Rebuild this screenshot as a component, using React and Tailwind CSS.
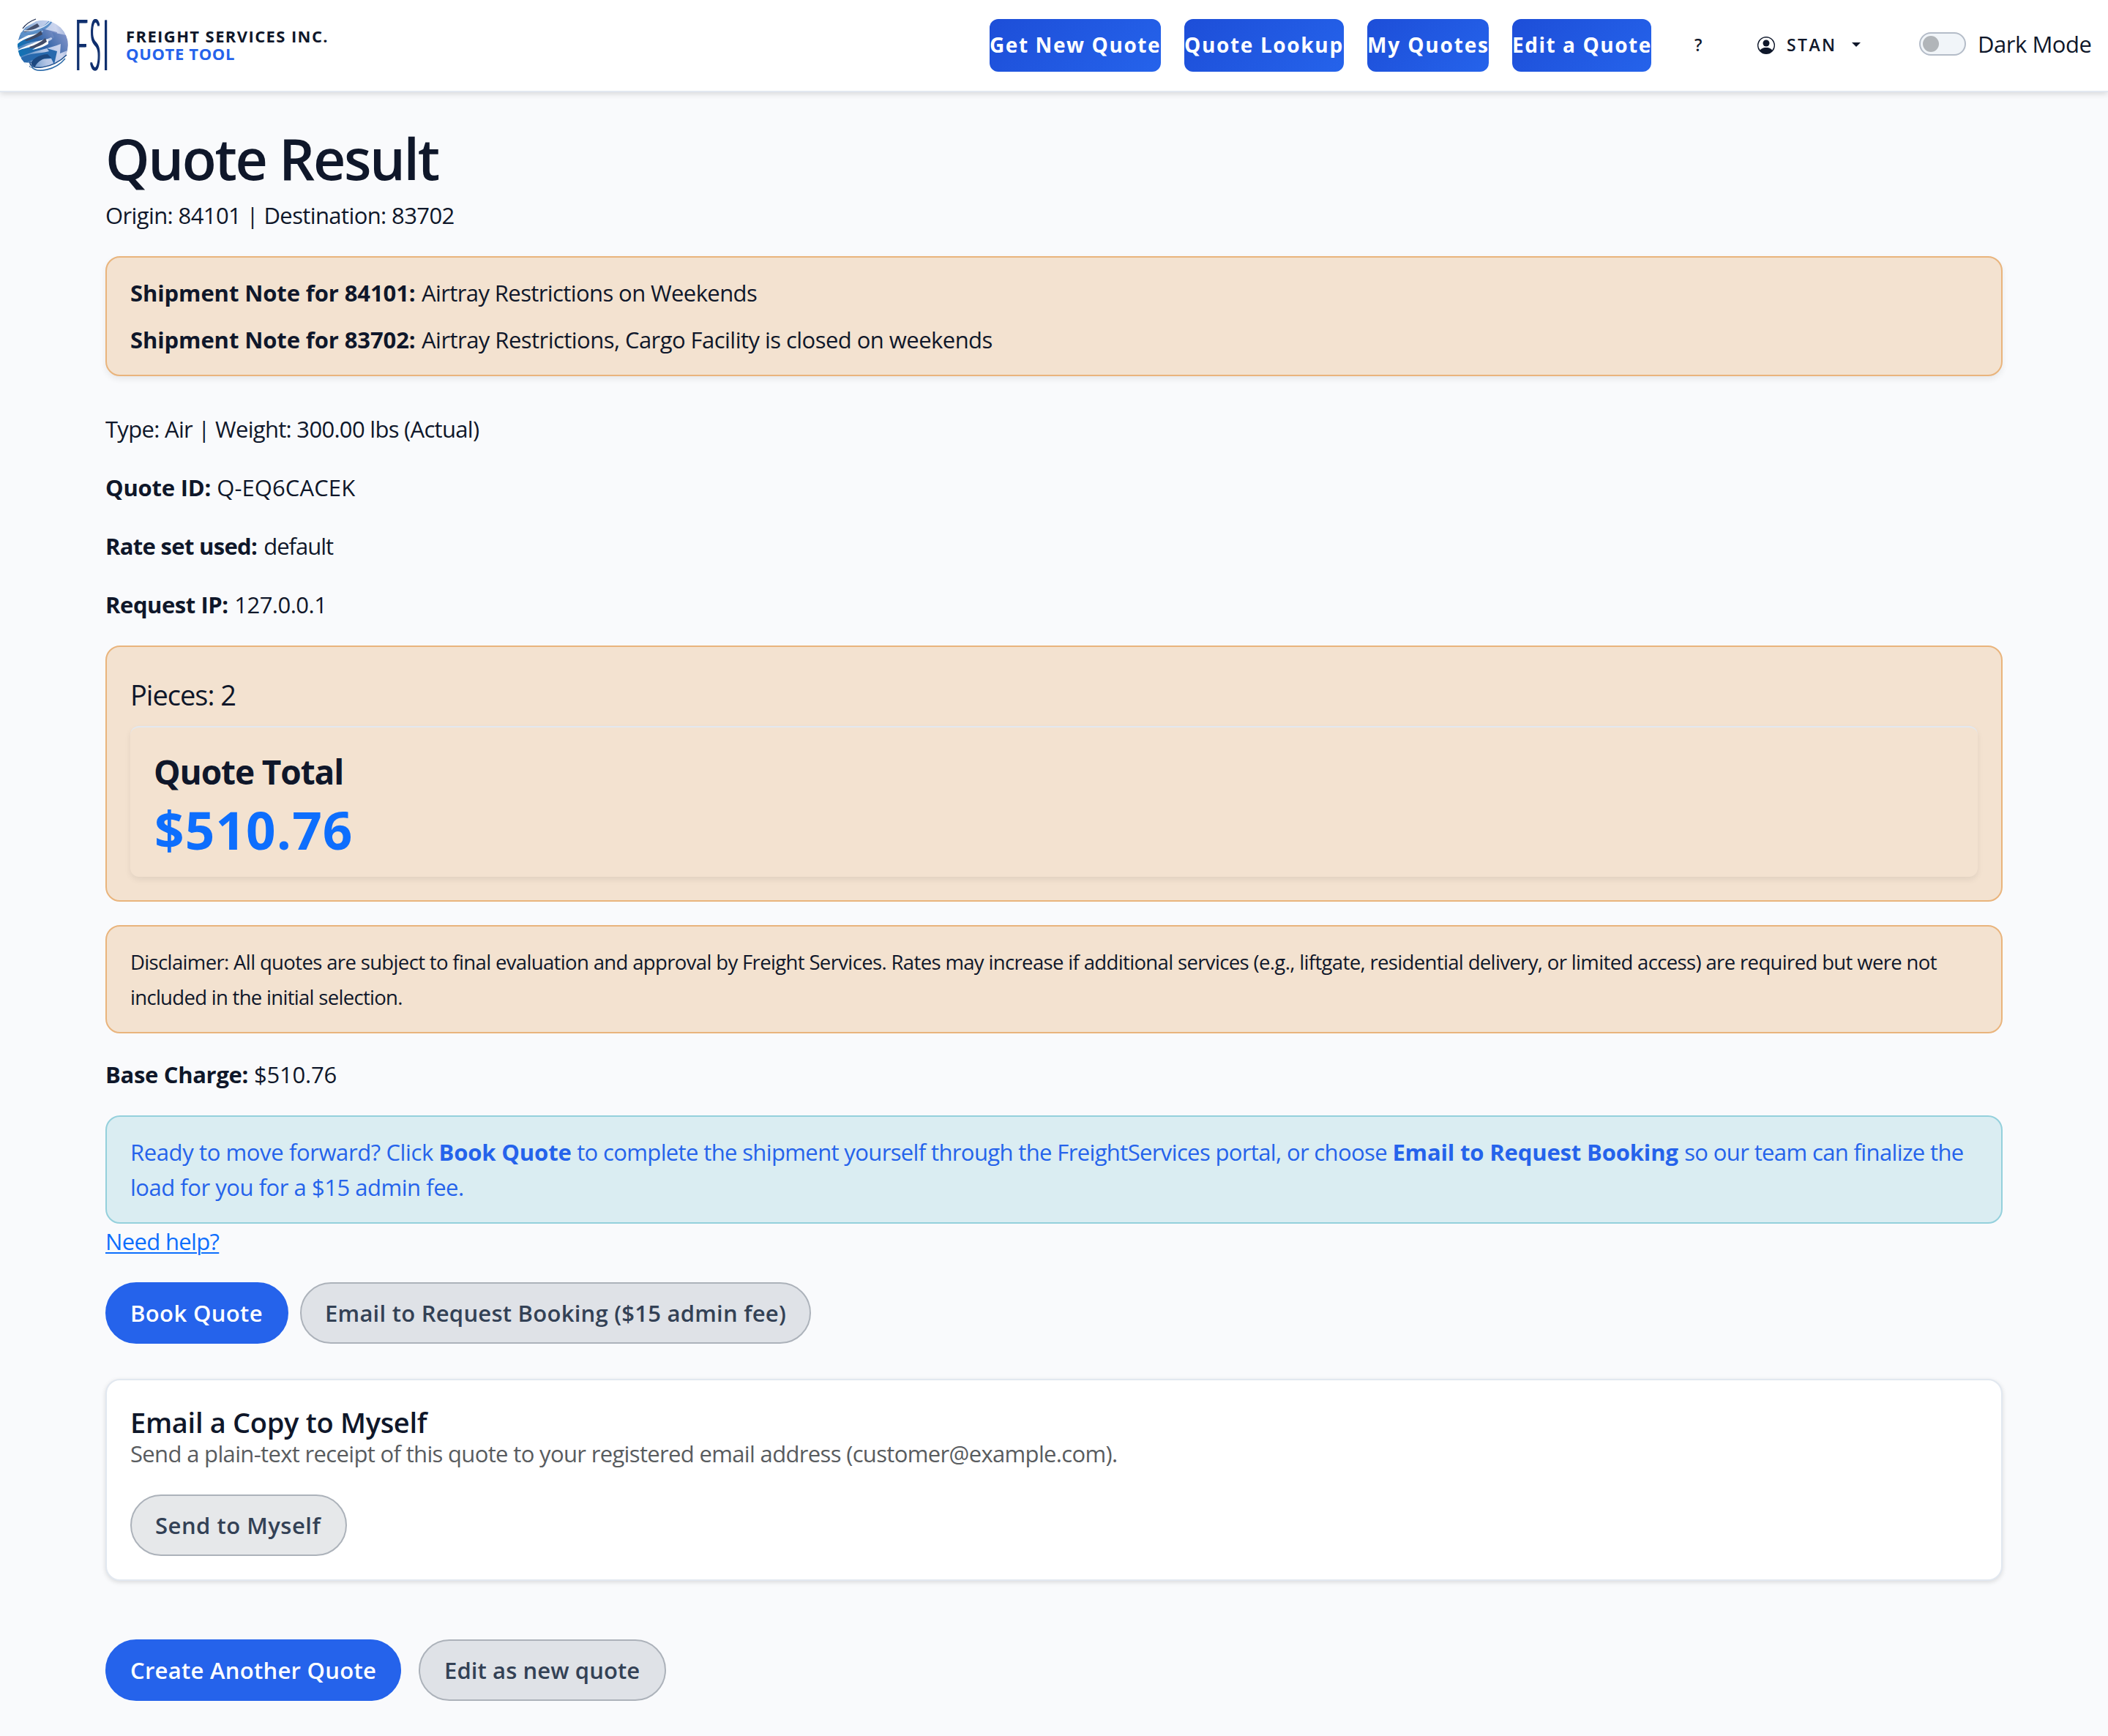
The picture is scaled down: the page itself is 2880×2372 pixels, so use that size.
import React from "react";
import clsx from "clsx";
import { BsPersonCircle } from "react-icons/bs";

const NAV_LINKS = [
  { label: "Get New Quote", className: "w-[234px] tracking-[1.59px]" },
  { label: "Quote Lookup", className: "w-[218px] tracking-[1.65px]" },
  { label: "My Quotes", className: "w-[166px] tracking-[1.85px]" },
  { label: "Edit a Quote", className: "w-[190px] tracking-[1.55px]" },
];

const LOGO_LETTERS = [
  { letter: "F", box: "w-5", scale: "scale-x-[0.31]" },
  { letter: "S", box: "w-[18px]", scale: "scale-x-[0.28]" },
  { letter: "I", box: "w-2", scale: "scale-x-[0.3]" },
];

const Globe = () => (
  <svg className="h-[76px] w-20 shrink-0" viewBox="0 0 80 76" aria-hidden="true">
    <defs>
      <linearGradient id="globe" x1="0.1" y1="0.6" x2="1" y2="0.4">
        <stop offset="0" stopColor="#4f86c0" />
        <stop offset="0.45" stopColor="#b4c6e6" />
        <stop offset="0.8" stopColor="#ccd5ee" />
        <stop offset="1" stopColor="#a3b3da" />
      </linearGradient>
      <linearGradient id="band" x1="0" y1="0.6" x2="1" y2="0.3">
        <stop offset="0" stopColor="#1272b4" />
        <stop offset="0.5" stopColor="#2f62a6" />
        <stop offset="1" stopColor="#7c90c6" />
      </linearGradient>
      <clipPath id="globeClip">
        <circle cx="36.5" cy="38" r="34.5" />
      </clipPath>
    </defs>
    <g clipPath="url(#globeClip)">
      <circle cx="36.5" cy="38" r="34.5" fill="url(#globe)" />
      <path d="M0 0 L26 0 L26 6 L13 13 L6 22 L0 24 Z" fill="#fff" />
      <path d="M1 32 C12 26 22 22 33 16 L34 20 C22 26 12 28 1 37 Z" fill="#fff" />
      <path d="M3 44 C16 37 28 34 42 28 L41 36 C28 43 14 43 3 50 Z" fill="#fff" />
      <path d="M5 20 C18 22 34 18 45 4 L50 5 C42 19 24 26 6 24 Z" fill="#5b8fc8" />
      {/* bands ending in arrow heads */}
      <path
        d="M2 36 C12 27 27 26 37 19 L35 15 L56 20 L53 34 L48 27 C36 33 18 31 1 42 Z"
        fill="url(#band)"
      />
      <path
        d="M1 46 C18 38 38 40 52 27 L49 20 L68 24 L71 32 L70 45 L60 49 L61 36 C46 42 22 46 4 54 Z"
        fill="url(#band)"
      />
      <path d="M5 56 C20 47 31 50 45 46 L42 42 L56 46 L52 64 L48 56 C36 57 24 55 12 63 Z" fill="#2869ad" />
      <path d="M18 68 C20 57 30 51 43 50 L48 55 C37 54 28 60 24 71 Z" fill="#1c4880" />
      <path d="M0 56 L10 61 L18 62 L18 76 L0 76 Z" fill="#fff" />
      <path d="M10 19 C16 15 22 12 29 8 L32 12 C25 16 19 18 12 20 Z" fill="#46516d" />
      <path d="M12 31 C20 27 28 23 34 18 L36 23 C29 27 22 30 14 32 Z" fill="#3f4963" />
      <path d="M39 33 L44 29 L44 36 C36 41 28 43 22 44 Z" fill="#fff" />
      <path d="M18 40 C25 38 33 34 40 28 L42 33 C35 38 28 41 20 42 Z" fill="#424c68" />
    </g>
    <g fill="none">
      <path d="M9 15 C13 9 19 5 27 2" stroke="#1d2c50" strokeWidth="1.3" />
      <path d="M11 18 C27 18 42 13 48 3" stroke="#eef3fa" strokeWidth="1.3" />
      <path d="M19 62 C19 74 49 73 68 54" stroke="#fff" strokeWidth="3" />
      <path d="M19 60 C17 74 50 70 69 51" stroke="#1f4f8c" strokeWidth="1.5" />
      <path d="M21 67 C28 77 54 72 67 56" stroke="#2a6aa8" strokeWidth="1.5" />
    </g>
  </svg>
);

const Logo = () => (
  <div className="flex h-[76px] items-center">
    <Globe />
    <div className="flex pb-[7px] font-[Lato,sans-serif] text-[96px] font-light leading-[96px] text-[#0f2f6e] [text-shadow:3px_0,6px_0]">
      {LOGO_LETTERS.map(({ letter, box, scale }) => (
        <div key={letter} className={box}>
          <span className={clsx("inline-block origin-left", scale)}>{letter}</span>
        </div>
      ))}
    </div>
  </div>
);

const Header = () => (
  <header className="relative flex h-[126px] items-center border-b-2 border-[#e2e8f0] bg-white pl-[22px] pr-6 shadow-[0_2px_8px_rgba(0,0,0,0.15)]">
    <Logo />
    <div className="ml-6 pb-0.5 text-[22px] font-bold leading-6">
      <p className="tracking-[1.4px]">FREIGHT SERVICES INC.</p>
      <p className="tracking-[0.65px] text-[#2563eb]">QUOTE TOOL</p>
    </div>
    <nav className="ml-auto flex items-center">
      <div className="flex gap-8">
        {NAV_LINKS.map(({ label, className }) => (
          <a
            key={label}
            href="#"
            className={clsx(
              "flex h-[72px] items-center whitespace-nowrap rounded-xl bg-[linear-gradient(135deg,#1d4ed8,#2563eb)] pb-0.5 text-[28px] font-bold text-white",
              className
            )}
          >
            {label}
          </a>
        ))}
      </div>
      <a href="#" className="ml-[59px] w-[13px] pb-0.5 text-[23px] font-semibold">
        ?
      </a>
      <button type="button" className="ml-[73px] flex items-center text-[23px] font-semibold">
        <BsPersonCircle className="size-6" />
        <span className="ml-4 w-[73px] pb-0.5 text-left tracking-[2.4px]">STAN</span>
        <span className="ml-4 -mt-0.5 border-x-[6px] border-t-[6px] border-x-transparent border-t-[#0f172a]" />
      </button>
    </nav>
    <label className="ml-20 flex items-center pb-1">
      <span className="flex h-8 w-16 items-center rounded-full border-2 border-[#b4bcc8] bg-[#f1f5f9] pl-[3px]">
        <span className="size-[22px] rounded-full bg-[#b1b5b9]" />
      </span>
      <span className="ml-4 w-[154px] whitespace-nowrap tracking-[-0.47px]">Dark Mode</span>
    </label>
  </header>
);

const Notice = ({ tone = "warning", className, children }) => (
  <div
    className={clsx(
      "rounded-[20px] border-2 px-8",
      tone === "warning" && "border-[#e9b47c] bg-[#f3e2d0]",
      tone === "info" && "border-[#94d0dc] bg-[#daedf2] text-[#2563eb]",
      className
    )}
  >
    {children}
  </div>
);

const Button = ({ variant = "secondary", className, children }) => (
  <button
    type="button"
    className={clsx(
      "flex h-[84px] items-center rounded-full border-2 px-8 font-semibold whitespace-nowrap",
      variant === "primary"
        ? "border-[#2563eb] bg-[#2563eb] text-white"
        : "border-[#acb2ba] text-[#334155]",
      className
    )}
  >
    {children}
  </button>
);

const App = () => {
  return (
    <div className="min-h-[2372px] bg-[#f9fafc] font-['Open_Sans',sans-serif] text-[31px] leading-[48px] text-[#0f172a]">
      <Header />
      <main className="px-36 pt-10">
        <h1 className="h-24 text-[77px] font-semibold leading-[102px] tracking-[-2.37px]">
          Quote Result
        </h1>
        <p className="mt-2 tracking-[-0.61px]">Origin: 84101 | Destination: 83702</p>

        <Notice className="mt-8 flex flex-col gap-4 py-6 shadow-[0_4px_8px_rgba(0,0,0,0.075)]">
          <p className="tracking-[-0.6px]">
            <b className="mr-px tracking-[-0.11px]">Shipment Note for 84101:</b> Airtray
            Restrictions on Weekends
          </p>
          <p className="tracking-[-0.54px]">
            <b className="mr-px tracking-[-0.11px]">Shipment Note for 83702:</b> Airtray
            Restrictions, Cargo Facility is closed on weekends
          </p>
        </Notice>

        <div className="mt-12 flex flex-col gap-8">
          <p className="tracking-[-0.7px]">Type: Air | Weight: 300.00 lbs (Actual)</p>
          <p className="tracking-[0.1px]">
            <b className="tracking-[-0.23px]">Quote ID:</b> Q-EQ6CACEK
          </p>
          <p className="tracking-[-1px]">
            <b className="mr-0.5 tracking-[-0.69px]">Rate set used:</b> default
          </p>
          <p className="tracking-[-0.5px]">
            <b className="mr-px tracking-[-0.45px]">Request IP:</b> 127.0.0.1
          </p>
        </div>

        <Notice className="mt-8 py-8">
          <p className="h-[60px] text-[38px] leading-[66px] tracking-[-1px]">Pieces: 2</p>
          <div className="mt-4 h-[206px] rounded-xl border-t-2 border-[#e2e8f0] px-8 pt-8 shadow-[0_4px_8px_rgba(0,0,0,0.075)]">
            <h2 className="text-[46px] font-bold leading-[56px] tracking-[-1.1px]">Quote Total</h2>
            <p className="mt-2 pl-px text-[71px] font-bold leading-[88px] tracking-[1.1px] text-[#0d6efd]">
              $510.76
            </p>
          </div>
        </Notice>

        <Notice className="mt-8 pt-[25px] pb-[23px] text-[27.5px]">
          <p className="tracking-[-0.645px]">
            Disclaimer: All quotes are subject to final evaluation and approval by Freight Services.
            Rates may increase if additional services (e.g., liftgate, residential delivery, or
            limited access) are required but were not
            <br />
            <span className="tracking-[-0.7px]">included in the initial selection.</span>
          </p>
        </Notice>

        <p className="mt-8 tracking-[-0.2px]">
          <b className="tracking-[-0.32px]">Base Charge:</b> $510.76
        </p>

        <Notice tone="info" className="mt-8 py-6">
          <p className="tracking-[-0.63px] whitespace-nowrap">
            <span className="tracking-[-0.39px]">Ready to move forward? Click </span>
            <b className="tracking-[-0.13px]">Book Quote</b> to complete the shipment yourself
            through the FreightServices portal, or choose{" "}
            <b className="mr-px tracking-[-0.15px]">Email to Request Booking</b> so our team can
            finalize the
            <br />
            <span className="tracking-[-0.47px]">load for you for a $15 admin fee.</span>
          </p>
        </Notice>
        <a
          href="#"
          className="block w-fit tracking-[-0.65px] text-[#0d6efd] underline decoration-2 underline-offset-[3px]"
        >
          Need help?
        </a>

        <div className="mt-8 flex gap-4">
          <Button variant="primary" className="w-[250px] tracking-[0.37px]">
            Book Quote
          </Button>
          <Button className="w-[698px] bg-[#dfe2e7] tracking-[0.25px]">
            Email to Request Booking ($15 admin fee)
          </Button>
        </div>

        <section className="mt-12 rounded-[20px] border-2 border-[#e2e8f0] bg-white p-8 shadow-[0_2px_6px_rgba(0,0,0,0.13)]">
          <h3 className="h-11 text-[38px] font-semibold leading-[50px] tracking-[-0.3px]">
            Email a Copy to Myself
          </h3>
          <p className="tracking-[-0.657px] text-[#595c5f]">
            Send a plain-text receipt of this quote to your registered email address
            (customer@example.com).
          </p>
          <Button className="mt-8 w-[296px] bg-[#e6e8ea] tracking-[0.5px]">Send to Myself</Button>
        </section>

        <div className="mt-20 flex gap-6">
          <Button variant="primary" className="w-[404px] tracking-[0.28px]">
            Create Another Quote
          </Button>
          <Button className="w-[338px] bg-[#dfe2e7] pl-[33px] tracking-[0.1px]">
            Edit as new quote
          </Button>
        </div>
      </main>
    </div>
  );
};

export default App;
